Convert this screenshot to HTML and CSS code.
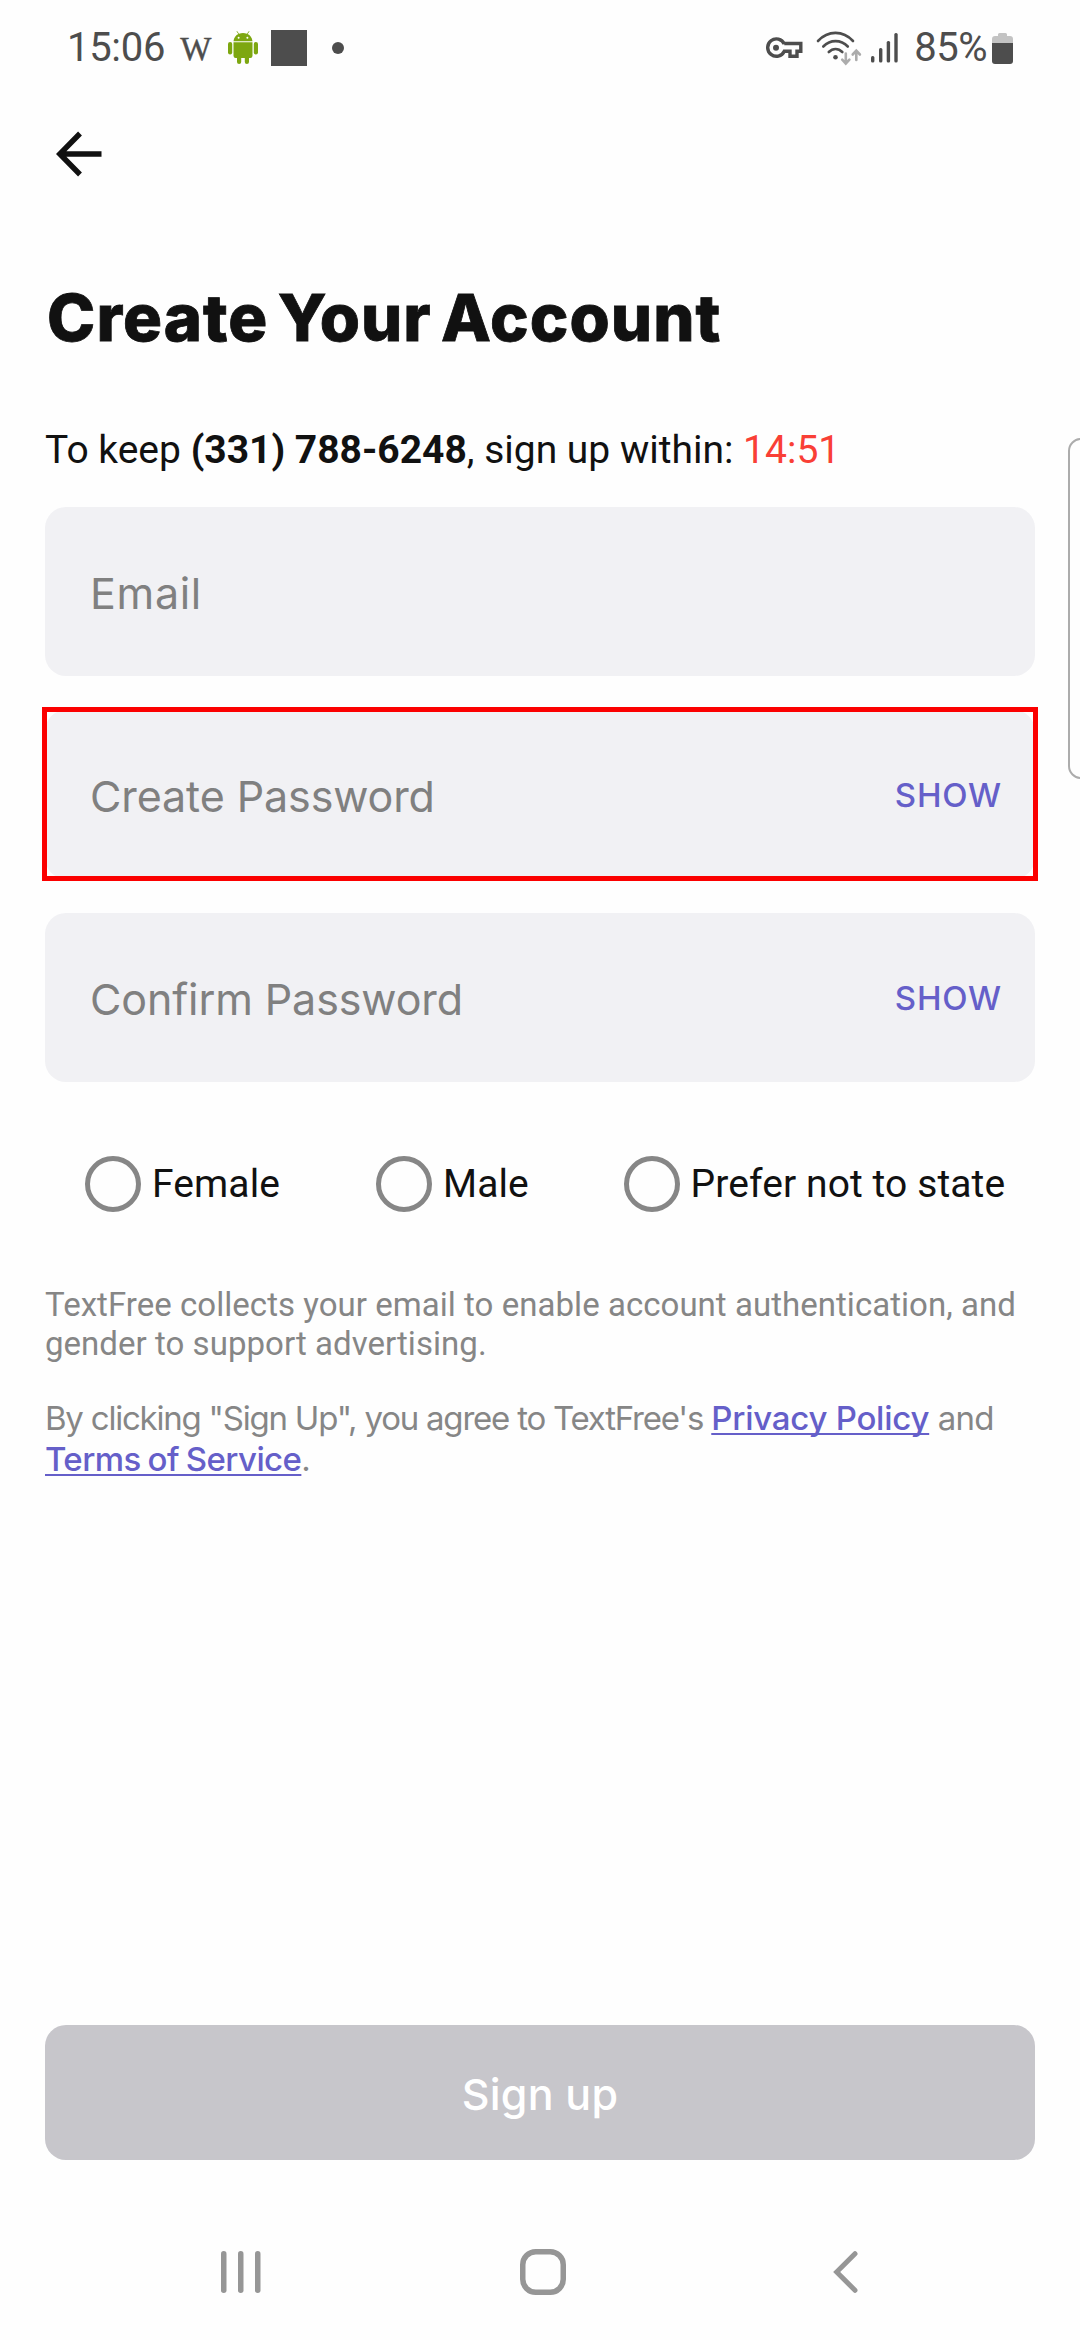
FILE: index.html
```html
<!DOCTYPE html>
<html lang="en">
<head>
<meta charset="utf-8">
<title>Create Your Account</title>
<link rel="stylesheet" href="styles.css">
</head>
<body>
<div class="screen">
  <header class="status">
    <span class="clock">15:06</span>
    <span class="wiki">W</span>
    <svg class="droid" width="30" height="34" viewBox="0 0 30 34" fill="#7da710"><path d="M5.500 10.200C5.800 6.600 8 4.200 10.400 3L8.500.4 9 0l2.100 2.700c2.500-.9 5.300-.9 7.800 0L21 0l.5.4L19.600 3C22 4.200 24.200 6.600 24.500 10.200Z"/><path d="M5.500 11.300h19v13.500a2.200 2.200 0 0 1-2.200 2.200H21v4a2 2 0 0 1-4.200 0v-4h-3.600v4a2 2 0 0 1-4.200 0v-4H7.700a2.200 2.200 0 0 1-2.200-2.200Z"/><rect x="0" y="11" width="4.200" height="12.500" rx="2.100"/><rect x="25.800" y="11" width="4.200" height="12.500" rx="2.100"/><circle cx="10.600" cy="6.700" r="1" fill="#fff"/><circle cx="19.400" cy="6.700" r="1" fill="#fff"/></svg>
    <span class="square"></span>
    <span class="dot"></span>
    <span class="spacer"></span>
    <svg class="key" width="37" height="22" viewBox="0 0 37 22" fill="none" stroke="#4d4d4d" stroke-width="3.400"><path d="M18.300 7A8.700 8.700 0 1 0 18.300 14.200H24V19.200H31V14.200H34.800V6.500H18.300"/><circle cx="10" cy="10.700" r="3" fill="#4d4d4d" stroke="none"/></svg>
    <svg class="wifi" width="46" height="36" viewBox="0 0 46 36" fill="none" stroke="#4d4d4d" stroke-width="2.600" stroke-linecap="round"><path d="M2 11C12 .2 27 .2 37 11"/><path d="M7.300 16.500c7-7.200 17.500-7.200 24.500 0"/><path d="M12.800 22c4-4 9.500-4 13.500 0"/><circle cx="19.500" cy="27.200" r="2.300" fill="#4d4d4d" stroke="none"/><g stroke="#acacac"><path d="M29.800 23.500v9.500M26.200 29.700l3.600 3.800 3.600-3.800"/><path d="M40.300 30v-9M36.700 24.500l3.600-3.800 3.600 3.800"/></g></svg>
    <svg class="signal" width="28" height="30" viewBox="0 0 28 30" fill="#4d4d4d"><rect x="0" y="23" width="3.400" height="6.500" rx="1.500"/><rect x="8" y="15" width="3.400" height="14.500" rx="1.500"/><rect x="15.700" y="8" width="3.400" height="21.500" rx="1.500"/><rect x="23.300" y="0" width="3.400" height="29.500" rx="1.500"/></svg>
    <span class="pct">85%</span>
    <svg class="battery" width="21" height="31" viewBox="0 0 21 31"><path fill="#c3c3c3" d="M6 3V1.500Q6 0 7.500 0h6Q15 0 15 1.500V3h3q3 0 3 3v5H0V6q0-3 3-3Z"/><path fill="#4d4d4d" d="M0 10h21v18q0 3-3 3H3q-3 0-3-3Z"/></svg>
  </header>
  <nav class="appbar">
    <svg width="46" height="46" viewBox="0 0 46 46" fill="none" stroke="#111" stroke-width="5.400"><path d="M24 2.500 3.800 23 24 43.500M4 23h41.500"/></svg>
  </nav>
  <main class="content">
    <h1 class="title">Create Your Account</h1>
    <p class="keep">To keep <b>(331) 788-6248</b>, sign up within: <span class="timer">14:51</span></p>
    <div class="fields">
      <div class="field"><span class="hint wide">Email</span></div>
      <div class="field marked"><span class="hint">Create Password</span><span class="show">SHOW</span></div>
      <div class="field"><span class="hint">Confirm Password</span><span class="show">SHOW</span></div>
    </div>
    <div class="radios">
      <label class="radio"><i class="ring"></i>Female</label>
      <label class="radio"><i class="ring"></i>Male</label>
      <label class="radio"><i class="ring"></i>Prefer not to state</label>
    </div>
    <p class="note">TextFree collects your email to enable account authentication, and<br>gender to support advertising.</p>
    <p class="terms"><span class="lead">By clicking "Sign Up", you agree to TextFree's </span><a class="privacy">Privacy Policy</a> and<br><a class="service">Terms of Service</a>.</p>
  </main>
  <button class="signup">Sign up</button>
  <footer class="navbar">
    <svg class="recents" width="40" height="42" viewBox="0 0 40 42" fill="#969696"><rect width="5.500" height="42" rx="2.700"/><rect x="17" width="5.500" height="42" rx="2.700"/><rect x="34" width="5.500" height="42" rx="2.700"/></svg>
    <svg class="home" width="46" height="46" viewBox="0 0 46 46" fill="none" stroke="#969696" stroke-width="5.500"><rect x="2.750" y="2.750" width="40.500" height="40.500" rx="13"/></svg>
    <svg class="back" width="26" height="42" viewBox="0 0 26 42" fill="none" stroke="#969696" stroke-width="5" stroke-linecap="round"><path d="M22 2.700 3.700 21 22 39.300"/></svg>
  </footer>
  <div class="edge"></div>
</div>
</body>
</html>
```
FILE: styles.css
```css
* { box-sizing: border-box; margin: 0; padding: 0; }
body { background: #fefefe; }
.screen { position: relative; width: 1080px; height: 2340px; overflow: hidden; display: flex; flex-direction: column; background: #fefefe; color: #111; font-family: Roboto, sans-serif; white-space: nowrap; }
.status { height: 96px; display: flex; align-items: center; padding: 0 67px; color: #4d4d4d; font-size: 40px; line-height: 96px; }
.clock { letter-spacing: -0.3px; }
.wiki { font-family: "Liberation Serif", serif; font-size: 33px; margin-left: 15px; padding-top: 2px; -webkit-text-stroke: 0.4px; }
.droid { margin-left: 17px; }
.square { width: 36px; height: 36px; margin-left: 13px; background: #4d4d4d; }
.dot { width: 12px; height: 12px; margin-left: 25px; border-radius: 50%; background: #4d4d4d; }
.spacer { flex: 1; }
.wifi { margin-left: 13px; }
.signal { margin-left: 9px; }
.pct { margin-left: 15px; letter-spacing: -0.5px; }
.battery { margin-left: 5px; }
.appbar { height: 116px; display: flex; align-items: center; padding-left: 56px; }
.content { flex: 1; padding: 66px 45px 0; }
.title { padding-left: 2px; font: 800 65px/80px Inter, sans-serif; letter-spacing: 1.05px; word-spacing: -5.8px; -webkit-text-stroke: 0.8px; }
.keep { margin-top: 67px; font-size: 39px; line-height: 50px; }
.timer { color: #f93f36; }
.fields { margin-top: 32px; display: flex; flex-direction: column; gap: 34px; }
.field { position: relative; height: 169px; padding: 3px 33px 0 45px; display: flex; align-items: center; justify-content: space-between; border-radius: 21px; background: #f1f1f4; font-family: Inter, sans-serif; }
.marked::after { content: ""; position: absolute; inset: -3px -3px -2px; border: 5px solid #fb0000; }
.hint { font-size: 43px; letter-spacing: -0.1px; color: #808080; }
.wide { letter-spacing: 0.7px; }
.show { padding-bottom: 2px; font-size: 33px; font-weight: 500; letter-spacing: 0.8px; color: #655fc9; }
.radios { margin-top: 74px; height: 56px; display: grid; grid-template-columns: 291px 247.500px auto; padding-left: 40px; }
.radio { display: flex; align-items: center; font-size: 39px; letter-spacing: 0.1px; }
.ring { flex: none; width: 56px; height: 56px; margin-right: 11px; border: 5.500px solid #868686; border-radius: 50%; }
.note { margin-top: 73px; color: #868686; font-size: 33px; letter-spacing: 0.04px; line-height: 39px; }
.terms { margin-top: 35px; color: #868686; font: 400 33px/41px Inter, sans-serif; letter-spacing: -0.75px; }
.lead { letter-spacing: -1.22px; }
.terms a { color: #655fc9; font-weight: 500; text-decoration: underline; text-decoration-thickness: 2px; text-underline-offset: 3px; text-decoration-skip-ink: none; }
.terms .privacy { letter-spacing: -0.24px; }
.terms .service { letter-spacing: -0.6px; word-spacing: -1.200px; }
.signup { height: 135px; margin: 0 45px; padding-top: 3px; border: 0; border-radius: 21px; background: #c7c6cb; color: #fff; font: 500 43px/132px Inter, sans-serif; letter-spacing: 0.2px; }
.navbar { height: 180px; padding: 44px 0 0 221px; display: flex; align-items: center; }
.home { margin-left: 259px; }
.back { margin-left: 267px; }
.edge { position: absolute; left: 1068px; top: 438px; width: 30px; height: 341px; border: 2px solid #acacac; border-radius: 13px; }
```
